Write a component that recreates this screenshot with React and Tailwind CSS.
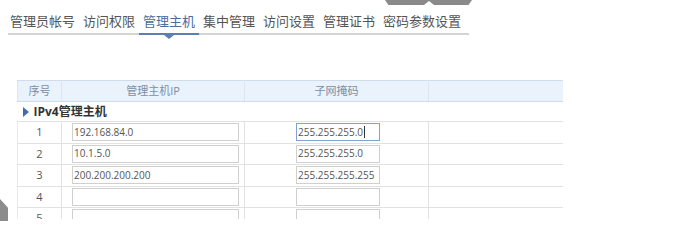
import React from 'react'

const tabs = ['管理员帐号', '访问权限', '管理主机', '集中管理', '访问设置', '管理证书', '密码参数设置']

const rows = [
  { n: 1, ip: '192.168.84.0', mask: '255.255.255.0', focus: true },
  { n: 2, ip: '10.1.5.0', mask: '255.255.255.0' },
  { n: 3, ip: '200.200.200.200', mask: '255.255.255.255' },
  { n: 4, ip: '', mask: '' },
  { n: 5, ip: '', mask: '' },
]

const font = { fontFamily: '"Open Sans", "Noto Sans CJK SC", sans-serif' }

export default function App() {
  return (
    <div className="relative h-[244px] w-[682px] overflow-hidden bg-white text-[#555]" style={font}>
      {/* 右上角收起按钮 */}
      <div className="absolute left-[385px] top-0 flex h-[5px] w-[87px] justify-center bg-[#8a8a8a] [clip-path:polygon(0_0,100%_0,96%_100%,4%_100%)]">
        <div className="mt-[1px] h-0 w-0 border-x-[5px] border-b-[4px] border-x-transparent border-b-white" />
      </div>
      {/* 左侧灰块 */}
      <div className="absolute left-0 top-[199px] h-[22px] w-[8px] bg-[#8c8c8c] [clip-path:polygon(0_0,100%_40%,100%_100%,0_100%)]" />

      <div className="px-[8px] pt-[11px]">
        <div className="flex w-[461px] border-b-2 border-[#d4d4d4] text-[13px] leading-[20px]">
          {tabs.map((t, i) => (
            <div
              key={t}
              className={`relative -mb-[2px] px-[4px] pb-[2px] ${i === 0 ? 'pl-[2px]' : ''} ${
                i === 2 ? 'border-b-2 border-[#5b7fae] text-[#4a6d9c]' : 'border-b-2 border-transparent'
              }`}
            >
              {t}
              {i === 2 && (
                <div className="absolute -bottom-[6px] left-1/2 h-0 w-0 -translate-x-1/2 border-x-[5px] border-t-[4px] border-x-transparent border-t-[#5b7fae]" />
              )}
            </div>
          ))}
        </div>
      </div>

      <div className="ml-[17px] mt-[45px] h-[139px] w-[546px] overflow-hidden">
        <table className="w-[546px] table-fixed border-collapse text-[11px]">
          <colgroup>
            <col className="w-[44px]" />
            <col className="w-[183px]" />
            <col className="w-[184px]" />
            <col className="w-[135px]" />
          </colgroup>
          <thead>
            <tr className="h-[21px] bg-[#eaf3fc] text-[#7d8ea3]">
              <th className="border border-t-[#cfdceb] border-b-[#cfdceb] border-x-[#dde6ef] font-normal">序号</th>
              <th className="border border-t-[#cfdceb] border-b-[#cfdceb] border-x-[#dde6ef] font-normal">管理主机IP</th>
              <th className="border border-t-[#cfdceb] border-b-[#cfdceb] border-x-[#dde6ef] font-normal">子网掩码</th>
              <th className="border border-y-[#cfdceb] border-l-[#dde6ef] border-r-transparent font-normal"></th>
            </tr>
          </thead>
          <tbody>
            <tr className="h-[20px]">
              <td colSpan={4} className="border-b border-[#e2e2e2] pl-[5px] text-[12px] font-bold text-[#333]">
                <span className="flex items-center gap-[5px]">
                  <span className="inline-block h-0 w-0 border-y-[5px] border-l-[6px] border-y-transparent border-l-[#3d6fb0]" />
                  IPv4管理主机
                </span>
              </td>
            </tr>
            {rows.map((r) => (
              <tr key={r.n} className="h-[21.5px]">
                <td className="border border-[#e2e2e2] border-l-[#ebebeb] text-center">{r.n}</td>
                <td className="border border-[#e2e2e2] px-[10px] py-0">
                  <div className="flex h-[18px] w-[167px] items-center border border-[#cfcfcf] px-[1px] text-[10px] text-[#555]">
                    {r.ip}
                  </div>
                </td>
                <td className="border border-[#e2e2e2] py-0 pl-[51px]">
                  <div
                    className={`flex h-[18px] w-[84px] items-center border px-[1px] text-[10px] text-[#555] ${
                      r.focus ? 'border-[#7fa2d6]' : 'border-[#cfcfcf]'
                    }`}
                  >
                    {r.mask}
                    {r.focus && <span className="ml-[1px] inline-block h-[12px] w-px bg-[#333]" />}
                  </div>
                </td>
                <td className="border-y border-l border-[#e2e2e2]"></td>
              </tr>
            ))}
          </tbody>
        </table>
      </div>
    </div>
  )
}
